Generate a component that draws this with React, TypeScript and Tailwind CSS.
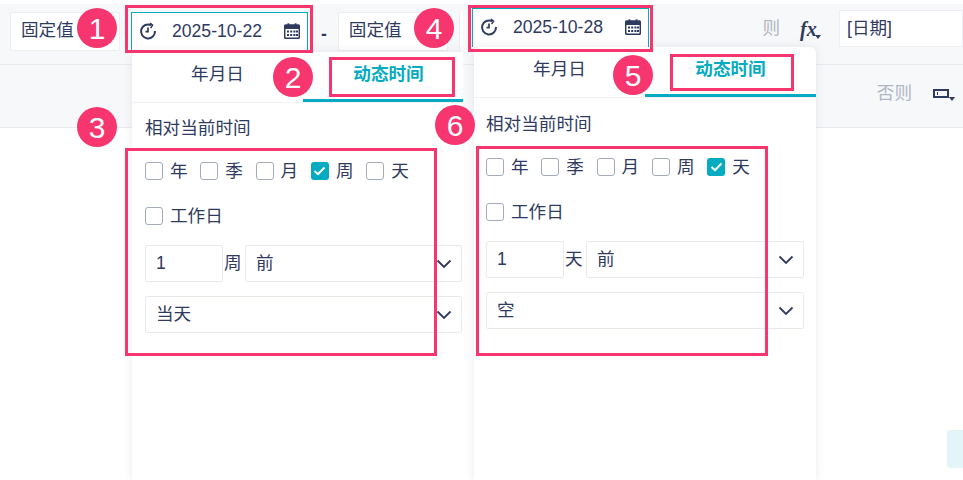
import React from 'react';

const FONT = "font-['Liberation_Sans','Noto_Sans_CJK_SC',sans-serif]";

const ClockIcon: React.FC = () => (
  <svg width="18" height="18" viewBox="0 0 18 18" fill="none" stroke="#2f3a5f" strokeWidth="2" className="shrink-0">
    <path d="M12.2 3.2A7 7 0 1 0 16 9" />
    <path d="M11 1l2.6 2.2L11.6 6" strokeWidth="1.5" />
    <path d="M9 5.5V9.6H6.5" strokeWidth="1.7" />
  </svg>
);

const CalendarIcon: React.FC = () => (
  <svg width="16" height="16" viewBox="0 0 16 16" className="shrink-0">
    <rect x="0.7" y="2" width="14.6" height="13.3" rx="1.2" fill="none" stroke="#2f3a5f" strokeWidth="1.5" />
    <rect x="0.7" y="2" width="14.6" height="4" fill="#2f3a5f" />
    <rect x="3.5" y="0.3" width="1.8" height="3" fill="#2f3a5f" />
    <rect x="10.7" y="0.3" width="1.8" height="3" fill="#2f3a5f" />
    {[3, 6.2, 9.4, 12].map((x) => (
      <React.Fragment key={x}>
        <rect x={x} y="7.5" width="2" height="2" fill="#2f3a5f" />
        <rect x={x} y="11" width="2" height="2" fill="#2f3a5f" />
      </React.Fragment>
    ))}
  </svg>
);

const Chevron: React.FC = () => (
  <svg width="16" height="10" viewBox="0 0 16 10" fill="none" stroke="#2f3a5f" strokeWidth="1.8" className="shrink-0">
    <path d="M1.5 1.5L8 8l6.5-6.5" />
  </svg>
);

const Badge: React.FC<{ n: number; className: string }> = ({ n, className }) => (
  <div className={`absolute z-30 flex h-10 w-10 items-center justify-center rounded-full bg-[#f73670] text-[30px] text-white ${className}`}>
    {n}
  </div>
);

const RedBox: React.FC<{ className: string }> = ({ className }) => (
  <div className={`pointer-events-none absolute z-20 border-[3px] border-[#f73670] ${className}`} />
);

const DateInput: React.FC<{ value: string; className: string }> = ({ value, className }) => (
  <div className={`flex h-[39px] w-[177px] shrink-0 items-center border border-b-0 border-[#05abc1] bg-white pb-[2px] pl-[7px] pr-[7px] ${className}`}>
    <ClockIcon />
    <span className="ml-[15px] flex-1 text-[17.6px]">{value}</span>
    <CalendarIcon />
  </div>
);

const Check: React.FC<{ label: string; checked?: boolean; className?: string }> = ({ label, checked, className }) => (
  <label className={`flex items-center gap-[7px] text-[17.6px] ${className ?? ''}`}>
    {checked ? (
      <span className="flex h-[18px] w-[18px] items-center justify-center rounded-[3px] bg-[#05abc1]">
        <svg width="13" height="10" viewBox="0 0 13 10" fill="none" stroke="white" strokeWidth="2">
          <path d="M1.5 5L5 8.2 11.5 1.5" />
        </svg>
      </span>
    ) : (
      <span className="h-[18px] w-[18px] rounded-[3px] border border-[#a3abbd] bg-white" />
    )}
    <span>{label}</span>
  </label>
);

const Select: React.FC<{ value: string; className?: string }> = ({ value, className }) => (
  <div className={`flex h-[37px] items-center justify-between rounded-[2px] border border-[#e8eaef] bg-white pl-[10px] pr-[9px] text-[17.6px] ${className ?? ''}`}>
    <span>{value}</span>
    <Chevron />
  </div>
);

const Popup: React.FC<{ unit: string; checked: string; end: string; className: string; inset: string }> = ({ unit, checked, end, className, inset }) => (
  <div className={`absolute bottom-0 z-10 w-[342px] rounded-t-[6px] bg-white shadow-[0_0_10px_rgba(40,50,80,0.1)] ${className}`}>
    <div className="flex h-[51px] border-b border-[#f0f1f4] text-[17.6px]">
      <div className="flex w-[171px] items-center justify-center pb-[6px]">年月日</div>
      <div className="flex w-[171px] items-center justify-center border-b-[3px] border-[#05abc1] pb-[3px] font-bold text-[#05abc1]">动态时间</div>
    </div>
    <div className={`pr-[12px] ${inset}`}>
      <div className="text-[17.6px] leading-[22px]">相对当前时间</div>
      <div className="mt-[23px] flex h-[18px] leading-[18px]">
        {['年', '季', '月', '周', '天'].map((d) => (
          <Check key={d} label={d} checked={d === checked} className="w-[55.3px] shrink-0" />
        ))}
      </div>
      <Check label="工作日" className="mt-[27px] leading-[18px]" />
      <div className="mt-[20px] flex items-center">
        <div className="flex h-[37px] w-[78px] items-center rounded-[2px] border border-[#e8eaef] pl-[10px] text-[17.6px]">1</div>
        <span className="ml-[1px] w-[21px] text-[17.6px]">{unit}</span>
        <Select value="前" className="flex-1" />
      </div>
      <Select value={end} className="mt-[14px]" />
    </div>
  </div>
);

export default function App() {
  return (
    <div className={`relative h-[480px] w-[963px] overflow-hidden bg-white text-[#2f3a5f] ${FONT}`}>
      <div className="mt-[4px] flex h-[61px] items-start border-b border-[#e9ebef] bg-[#f7f8fa] pl-[10px] pt-[8px]">
        <div className="flex h-[39px] w-[110px] shrink-0 items-center rounded-[2px] border border-[#eceef2] bg-white pb-[2px] pl-[10px] text-[17.6px]">固定值</div>
        <DateInput value="2025-10-22" className="ml-[11px]" />
        <span className="ml-[13px] mt-[9px] text-[17.6px] font-bold">-</span>
        <div className="ml-[11px] flex h-[39px] w-[110px] shrink-0 items-center rounded-[2px] border border-[#eceef2] bg-white pb-[2px] pl-[10px] text-[17.6px]">固定值</div>
        <div className="ml-[11px] h-[39px] w-[5px] shrink-0 border-l border-[#eceef2] bg-white" />
        <div className="-mt-[2px] ml-auto flex h-[37px] items-center">
          <span className="text-[17.6px] text-[#b0b6c4]">则</span>
          <span className="relative ml-[20px] w-[20px] font-['Liberation_Serif',serif] text-[20px] font-semibold italic leading-none">
            fx
            <span className="absolute bottom-[0px] right-[-1px] h-0 w-0 border-x-[3.5px] border-t-[4px] border-x-transparent border-t-[#2f3a5f]" />
          </span>
          <div className="ml-[19px] flex h-[37px] w-[124px] items-center border border-[#eceef2] bg-white pl-[7px] text-[17.6px]">[日期]</div>
        </div>
      </div>
      <div className="flex h-[63px] items-center justify-end border-b border-[#e9ebef] bg-[#f7f8fa] pb-[5px] pr-[14px]">
        <span className="text-[17.6px] text-[#b0b6c4]">否则</span>
        <span className="relative ml-[21px] h-[9px] w-[16px] border-2 border-[#2f3a5f]">
          <span className="absolute left-[2px] top-[1px] h-[3px] w-px bg-[#2f3a5f]" />
          <span className="absolute right-[-8px] top-[6px] h-0 w-0 border-x-[3.5px] border-t-[4px] border-x-transparent border-t-[#2f3a5f]" />
        </span>
      </div>

      <Popup unit="周" checked="周" end="当天" className="left-[132px] top-[52px]" inset="pl-[13px] pt-[14px]" />

      {/* 第二张截图盖在右侧 */}
      <div className="absolute left-[463px] top-0 z-10 flex h-full w-[11px] flex-col">
        <div className="h-[4px] bg-white" />
        <div className="h-[61px] border-b border-[#e9ebef] bg-[#f7f8fa]" />
        <div className="h-[63px] border-b border-[#e9ebef] bg-[#f7f8fa]" />
        <div className="flex-1 bg-white" />
      </div>
      <DateInput value="2025-10-28" className="absolute left-[472px] top-[8px] z-10" />
      <Popup unit="天" checked="天" end="空" className="left-[474px] top-[47px]" inset="pl-[12px] pt-[15px]" />

      <div className="absolute left-[947px] top-[430px] h-[38px] w-[16px] rounded-l-[3px] bg-[#e3f5f9]" />

      <RedBox className="left-[125px] top-[5px] h-[48px] w-[188px]" />
      <RedBox className="left-[329px] top-[57px] h-[40px] w-[126px]" />
      <RedBox className="left-[125px] top-[148px] h-[208px] w-[312px]" />
      <RedBox className="left-[468px] top-[5px] h-[47px] w-[185px]" />
      <RedBox className="left-[670px] top-[54px] h-[37px] w-[124px]" />
      <RedBox className="left-[476px] top-[146px] h-[210px] w-[292px]" />

      <Badge n={1} className="left-[77px] top-[8px]" />
      <Badge n={2} className="left-[273px] top-[57px]" />
      <Badge n={3} className="left-[77px] top-[107px]" />
      <Badge n={4} className="left-[414px] top-[8px]" />
      <Badge n={5} className="left-[613px] top-[55px]" />
      <Badge n={6} className="left-[435px] top-[105px]" />
    </div>
  );
}
